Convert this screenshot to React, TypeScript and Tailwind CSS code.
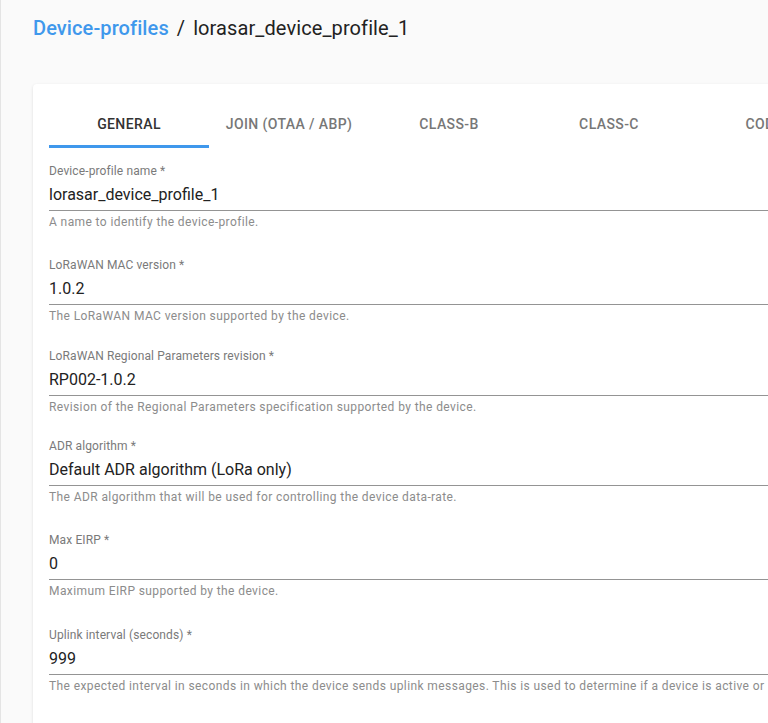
import React from 'react';

interface FieldProps {
    label: string;
    value: string;
    helper: string;
    className?: string;
}

const Field: React.FC<FieldProps> = ({ label, value, helper, className }) => (
    <div className={className}>
        <div className="h-4 text-[12px] leading-4 text-[#7a7a7a] tracking-[0.00938em]">{label}</div>
        <div className="h-[32px] flex items-center border-b border-[#949494] text-[16px] text-[#222]">
            {value}
        </div>
        <div className="mt-[3px] h-4 text-[12px] leading-4 text-[#8c8c8c] tracking-[0.03333em] whitespace-nowrap">
            {helper}
        </div>
    </div>
);

const tabs = ['General', 'Join (OTAA / ABP)', 'Class-B', 'Class-C', 'Codec'];

const fields = [
    {
        label: 'Device-profile name *',
        value: 'lorasar_device_profile_1',
        helper: 'A name to identify the device-profile.',
        gap: 'mb-[27px]',
    },
    {
        label: 'LoRaWAN MAC version *',
        value: '1.0.2',
        helper: 'The LoRaWAN MAC version supported by the device.',
        gap: 'mb-[24px]',
    },
    {
        label: 'LoRaWAN Regional Parameters revision *',
        value: 'RP002-1.0.2',
        helper: 'Revision of the Regional Parameters specification supported by the device.',
        gap: 'mb-[23px]',
    },
    {
        label: 'ADR algorithm *',
        value: 'Default ADR algorithm (LoRa only)',
        helper: 'The ADR algorithm that will be used for controlling the device data-rate.',
        gap: 'mb-[27px]',
    },
    {
        label: 'Max EIRP *',
        value: '0',
        helper: 'Maximum EIRP supported by the device.',
        gap: 'mb-[28px]',
    },
    {
        label: 'Uplink interval (seconds) *',
        value: '999',
        helper:
            'The expected interval in seconds in which the device sends uplink messages. This is used to determine if a device is active or inactive.',
        gap: 'mb-6',
    },
];

export default function App() {
    return (
        <div
            className="w-[768px] h-[723px] overflow-hidden bg-[#fafafa] border-l border-[#e4e4e4]"
            style={{ fontFamily: 'Roboto, "Noto Sans", sans-serif' }}
        >
            <div className="pl-8 pt-[16px]">
                <div className="flex items-center h-[24px] text-[20px] leading-6 tracking-[0.005em]">
                    <span className="text-[#3f98ec] font-medium">Device-profiles</span>
                    <span className="mx-[8px] text-[#222]">/</span>
                    <span className="text-[#222]">lorasar_device_profile_1</span>
                </div>

                <div className="mt-[44px] w-[900px] bg-white rounded-[4px] shadow-[0_1px_3px_rgba(0,0,0,0.12)] px-4 pt-4 pb-6">
                    <div className="flex h-[48px]">
                        {tabs.map((t, i) => (
                            <div
                                key={t}
                                className={
                                    'relative w-[160px] shrink-0 flex items-center justify-center text-[14px] font-medium uppercase tracking-[0.02857em] ' +
                                    (i === 0 ? 'text-[#333]' : 'text-[#777]')
                                }
                            >
                                {t}
                                {i === 0 && <div className="absolute left-0 right-0 bottom-0 h-[3px] bg-[#3f98ec]" />}
                            </div>
                        ))}
                    </div>

                    <div className="mt-[15px]">
                        {fields.map((f) => (
                            <Field key={f.label} label={f.label} value={f.value} helper={f.helper} className={f.gap} />
                        ))}
                    </div>
                </div>
            </div>
        </div>
    );
}
